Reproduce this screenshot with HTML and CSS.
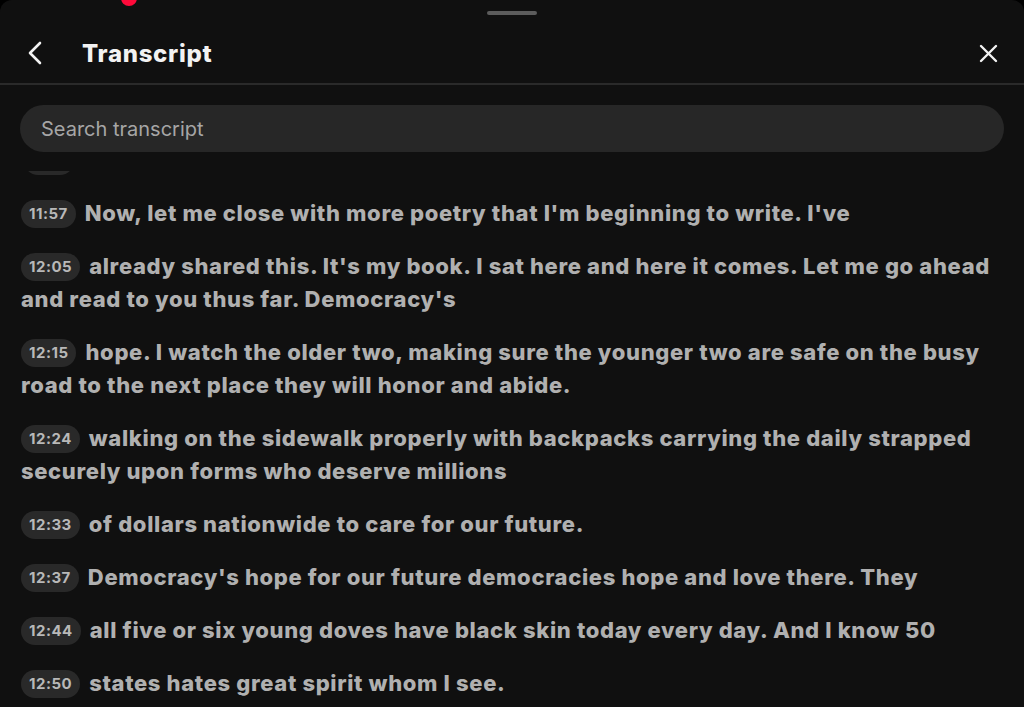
FILE: index.html
```html
<!DOCTYPE html>
<html lang="en">
<head>
<meta charset="utf-8">
<title>Transcript</title>
<link rel="stylesheet" href="styles.css">
</head>
<body>
<div class="sheet">
  <span class="rec-dot"></span>
  <div class="handle"></div>
  <header class="header">
    <button class="icon-btn back" aria-label="Back">
      <svg width="16" height="24" viewBox="0 0 16 24"><path d="M13 2 L3 12 L13 22" fill="none" stroke="#f2f2f2" stroke-width="2.6" stroke-linecap="round" stroke-linejoin="round"/></svg>
    </button>
    <h1 class="title">Transcript</h1>
    <button class="icon-btn close" aria-label="Close">
      <svg width="19" height="19" viewBox="0 0 19 19"><path d="M2 2 L17 17 M17 2 L2 17" fill="none" stroke="#f2f2f2" stroke-width="2.4" stroke-linecap="round"/></svg>
    </button>
  </header>
  <div class="search">Search transcript</div>
  <div class="scroll">
    <div class="list">
      <div class="row"><span class="ts ts-empty"></span></div>
      <p class="row"><span class="ts">11:57</span>Now, let me close with more poetry that I'm beginning to write. I've</p>
      <p class="row"><span class="ts">12:05</span>already shared this. It's my book. I sat here and here it comes. Let me go ahead and read to you thus far. Democracy's</p>
      <p class="row"><span class="ts">12:15</span>hope. I watch the older two, making sure the younger two are safe on the busy road to the next place they will honor and abide.</p>
      <p class="row"><span class="ts">12:24</span>walking on the sidewalk properly with backpacks carrying the daily strapped securely upon forms who deserve millions</p>
      <p class="row"><span class="ts">12:33</span>of dollars nationwide to care for our future.</p>
      <p class="row"><span class="ts">12:37</span>Democracy's hope for our future democracies hope and love there. They</p>
      <p class="row"><span class="ts">12:44</span>all five or six young doves have black skin today every day. And I know 50</p>
      <p class="row"><span class="ts">12:50</span>states hates great spirit whom I see.</p>
    </div>
  </div>
</div>
</body>
</html>
```

FILE: styles.css
```css
* { box-sizing: border-box; }
html, body {
  margin: 0;
  padding: 0;
  background: #000;
  height: 100%;
  overflow: hidden;
}
.sheet {
  position: relative;
  height: 707px;
  background: #101010;
  border-radius: 12px 12px 0 0;
  display: flex;
  flex-direction: column;
  font-family: Inter, "Liberation Sans", sans-serif;
  color: #b0b0b0;
}
.rec-dot {
  position: absolute;
  left: 121px;
  top: -10px;
  width: 16px;
  height: 16px;
  border-radius: 50%;
  background: #ff0a3a;
}
.handle {
  align-self: center;
  width: 50px;
  height: 4px;
  margin-top: 11px;
  border-radius: 3px;
  background: #5c5c5c;
}
.header {
  height: 70px;
  padding: 8px 26px 0 27px;
  display: flex;
  align-items: center;
  border-bottom: 2px solid #2a2a2a;
}
.icon-btn {
  background: none;
  border: 0;
  padding: 0;
  display: flex;
  cursor: pointer;
}
.title {
  margin: 0 0 0 39px;
  flex: 1;
  font-size: 24px;
  font-weight: 800;
  color: #f2f2f2;
  letter-spacing: 0.7px;
}
.search {
  margin: 20px 20px 0;
  height: 47px;
  border-radius: 24px;
  background: #272727;
  padding-left: 21px;
  display: flex;
  align-items: center;
  font-size: 20px;
  color: #a6a6a6;
}
.scroll {
  margin-top: 19px;
  flex: 1;
  overflow: hidden;
  padding: 0 20px 0 21px;
}
.list {
  margin-top: -27px;
  display: flex;
  flex-direction: column;
  gap: 20px;
}
.row {
  margin: 0;
  min-height: 33px;
  font-size: 22px;
  line-height: 33px;
  font-weight: 800;
  letter-spacing: 0.65px;
  color: #b0b0b0;
}
.ts {
  display: inline-block;
  vertical-align: middle;
  height: 28px;
  line-height: 28px;
  padding: 0 8px;
  margin: -3px 9px 0 0;
  border-radius: 14px;
  background: #292929;
  color: #b8b8b8;
  font-size: 15px;
  font-weight: 700;
  letter-spacing: 0.5px;
}
.ts-empty {
  width: 50px;
  margin-left: 3px;
}
```
